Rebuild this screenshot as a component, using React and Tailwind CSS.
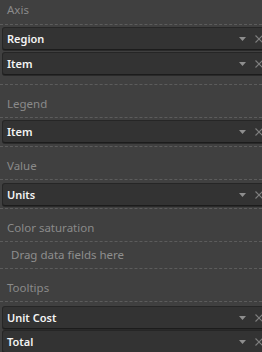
import React from 'react';

const font = { fontFamily: '"Noto Sans", "Open Sans", sans-serif' };

const FieldPill = ({ name }) => (
  <div className="flex items-center h-[23px] w-[272px] ml-[2px] rounded-[3px] bg-[#333333] border border-[#262626] border-b-[#1c1c1c] shadow-[0_1px_0_#2a2a2a]">
    <span className="flex-1 pl-[4px] text-[11px] leading-4 font-semibold text-[#f4f4f4]">{name}</span>
    <svg width="7" height="4" viewBox="0 0 7 4" className="mr-[9px]">
      <path d="M0 0 L7 0 L3.5 4 Z" fill="#8e8e8e" />
    </svg>
    <svg width="8" height="8" viewBox="0 0 8 8" className="mr-[10px]">
      <path d="M0.5 0.5 L7.5 7.5 M7.5 0.5 L0.5 7.5" stroke="#7e7e7e" strokeWidth="1.1" />
    </svg>
  </div>
);

const SectionLabel = ({ text, first }) => (
  <div className={`flex items-end pl-[7px] ${first ? 'h-[24px] pb-[6px]' : 'h-[32px] pb-[5px]'}`}>
    <span className="text-[11.5px] leading-4 text-[#8a8a8a]">{text}</span>
  </div>
);

const Well = ({ children, className = '' }) => (
  <div className={`border-y border-dashed border-[#5c5c5c] ${className}`}>{children}</div>
);

export default function App() {
  return (
    <div className="w-[262px] h-[352px] overflow-hidden bg-[#404040]" style={font}>
      <SectionLabel text="Axis" first />
      <Well className="flex flex-col gap-[2px] pt-[2px] pb-[9px]">
        <FieldPill name="Region" />
        <FieldPill name="Item" />
      </Well>

      <SectionLabel text="Legend" />
      <Well className="pt-[2px] pb-[3px]">
        <FieldPill name="Item" />
      </Well>

      <SectionLabel text="Value" />
      <Well className="pt-[3px] pb-[2px]">
        <FieldPill name="Units" />
      </Well>

      <SectionLabel text="Color saturation" />
      <Well className="h-[28px] flex items-center pl-[11px]">
        <span className="text-[11.5px] leading-4 text-[#8e8e8e]">Drag data fields here</span>
      </Well>

      <SectionLabel text="Tooltips" />
      <div className="border-t border-dashed border-[#5c5c5c] flex flex-col gap-[1px] pt-[4px]">
        <FieldPill name="Unit Cost" />
        <FieldPill name="Total" />
      </div>
    </div>
  );
}
